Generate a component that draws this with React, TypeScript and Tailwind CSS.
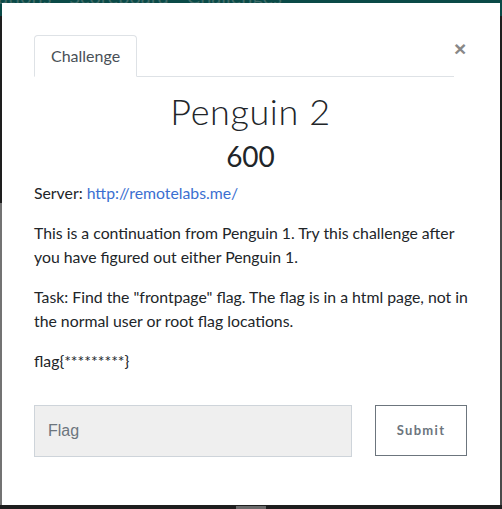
import React from "react";

export default function App() {
  return (
    <div className="relative w-[502px] h-[509px] bg-[#1e1e1e] overflow-hidden" style={{ fontFamily: "Lato, 'Noto Sans', sans-serif" }}>
      <div className="h-[30px] bg-[#0a4a47] flex items-start gap-[18px] text-[20px] leading-none text-[#3f6a67] -mt-[14px]">
        <span className="-ml-[2px]">ations</span>
        <span>Scoreboard</span>
        <span>Challenges</span>
      </div>
      <div className="absolute left-0 top-[203px] w-[2px] h-[302px] bg-[#737373]" />
      <div className="absolute right-0 top-[200px] w-[2px] h-[305px] bg-[#4a4a4a]" />
      <div className="absolute left-[236px] bottom-0 h-[3px] w-[30px] bg-[#6a6a6a]" />

      <div className="absolute left-[2px] top-[3px] w-[498px] h-[502px] bg-white">
        <button className="absolute left-[452px] top-[35px] text-[21px] leading-none font-bold text-[#888]" style={{ fontFamily: "'Liberation Sans', Arial, sans-serif" }}>
          ×
        </button>
        <div className="pl-[32px] pt-[32px] pr-[28px]">
          <div className="w-[420px] flex border-b border-[#dee2e6]">
            <div className="-mb-px h-[42px] px-[16px] flex items-center border border-[#dee2e6] border-b-white rounded-t-[4px] bg-white text-[16px] text-[#495057]">
              Challenge
            </div>
          </div>
          <div className="text-center pr-[5px] mt-[12px] text-[36px] leading-[44px] font-light tracking-[0.6px] text-[#212529]">
            Penguin 2
          </div>
          <div className="text-center pr-[5px] mt-[5px] text-[28px] leading-[36px] font-normal text-[#212529]">
            600
          </div>
          <div className="mt-[7px] text-[15.8px] leading-[24px] text-[#212529]">
            <p className="mb-[16px]">
              Server: <a className="text-[#3b6fd1]">http://remotelabs.me/</a>
            </p>
            <p className="mb-[16px]">
              This is a continuation from Penguin 1. Try this challenge after you have figured out either Penguin 1.
            </p>
            <p className="mb-[16px]">
              Task: Find the "frontpage" flag. The flag is in a html page, not in the normal user or root flag locations.
            </p>
            <p>flag{"{*********}"}</p>
          </div>
          <div className="mt-[32px] flex items-start">
            <div className="w-[318px] h-[52px] bg-[#efefef] border border-[#ced4da] flex items-center pl-[13px] text-[16px] text-[#6c757d]" style={{ fontFamily: "'Liberation Sans', Arial, sans-serif" }}>
              Flag
            </div>
            <button className="ml-[23px] w-[92px] h-[51px] border border-[#6c757d] text-[#6c757d] text-[13px] font-bold tracking-[1.3px]">
              Submit
            </button>
          </div>
        </div>
      </div>
    </div>
  );
}
